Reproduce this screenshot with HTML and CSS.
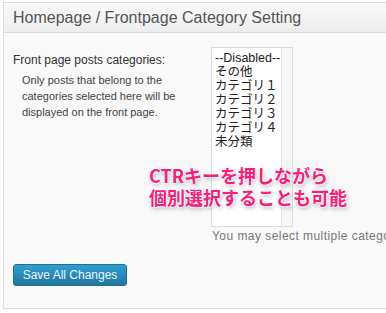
FILE: index.html
```html
<!DOCTYPE html>
<html lang="ja">
<head>
<meta charset="utf-8">
<link rel="stylesheet" href="styles.css">
</head>
<body>
<div class="panel">
  <div class="panel-head">Homepage / Frontpage Category Setting</div>
  <div class="panel-body">
    <div class="field">
      <div class="label-col">
        <div class="label">Front page posts categories:</div>
        <p class="desc">Only posts that belong to the categories selected here will be displayed on the front page.</p>
      </div>
      <div class="input-col">
        <div class="listbox">
          <ul class="options">
            <li>--Disabled--</li>
            <li>その他</li>
            <li>カテゴリ１</li>
            <li>カテゴリ２</li>
            <li>カテゴリ３</li>
            <li>カテゴリ４</li>
            <li>未分類</li>
          </ul>
          <div class="scrolltrack"></div>
        </div>
        <div class="hint">You may select multiple categories</div>
      </div>
    </div>
    <button class="save-btn" type="button">Save All Changes</button>
  </div>
  <div class="callout">CTRキーを押しながら<br>個別選択することも可能</div>
</div>
</body>
</html>
```
FILE: styles.css
```css
html, body {
  margin: 0;
  padding: 0;
  background: #fff;
  overflow: hidden;
}
body {
  width: 386px;
  height: 313px;
  padding: 2px 0 0 3px;
  box-sizing: border-box;
  font-family: "Liberation Sans", Arial, "Noto Sans CJK JP", sans-serif;
  color: #333;
}
.panel {
  position: relative;
  width: 440px;
  height: 307px;
  box-sizing: border-box;
  border: 1px solid #dcdcdc;
  background: #f9f9f9;
}
.panel-head {
  height: 30px;
  box-sizing: border-box;
  padding: 6px 0 0 9px;
  font-size: 16px;
  color: #555;
  background: linear-gradient(#f9f9f9, #ededed);
  border-bottom: 1px solid #dcdcdc;
  line-height: 18px;
}
.panel-body {
  padding: 14px 0 0 9px;
}
.field {
  display: flex;
}
.label-col {
  width: 198px;
}
.label {
  font-size: 12px;
  line-height: 16px;
  color: #333;
  margin-top: 5px;
}
.desc {
  margin: 4px 0 0 9px;
  font-size: 11px;
  line-height: 16px;
  color: #444;
  width: 170px;
}
.input-col {
  display: flex;
  flex-direction: column;
}
.listbox {
  display: flex;
  width: 82px;
  height: 180px;
  box-sizing: border-box;
  border: 1px solid #dcdcdc;
  background: #fff;
}
.options {
  list-style: none;
  margin: 0;
  padding: 3px 0 0 3px;
  flex: 1;
  min-width: 0;
  font-family: "Liberation Sans", "Noto Sans CJK JP", sans-serif;
  font-size: 12.5px;
  line-height: 14px;
  color: #222;
  white-space: nowrap;
  overflow: hidden;
}
.options li {
  height: 14px;
}
.scrolltrack {
  width: 10px;
  flex: none;
  border-left: 1px solid #e6e6e6;
  background: #f7f7f7;
}
.hint {
  margin-top: 1px;
  margin-left: 1px;
  font-size: 12px;
  line-height: 16px;
  color: #777;
  letter-spacing: 0.45px;
  white-space: nowrap;
}
.save-btn {
  margin-top: 20px;
  width: 114px;
  height: 22px;
  padding: 0;
  border: 1px solid #1f6f94;
  border-radius: 3px;
  background: linear-gradient(#2f9fd1, #21769c);
  color: #eaf6fb;
  font-family: "Liberation Sans", Arial, sans-serif;
  font-size: 12px;
  line-height: 20px;
  display: block;
}
.callout {
  position: absolute;
  left: 145px;
  top: 161px;
  font-family: "Noto Sans CJK JP", sans-serif;
  font-weight: 700;
  font-size: 18px;
  line-height: 22px;
  color: #f2227b;
  text-shadow: 0 0 2px #fff, 0 0 2px #fff, 0 0 3px #fff, 1px 2px 4px rgba(0,0,0,0.35);
  white-space: nowrap;
}
```
